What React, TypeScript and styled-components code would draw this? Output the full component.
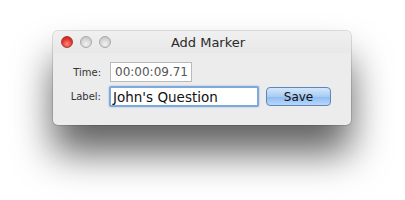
import { createGlobalStyle } from "styled-components";
import styled from "styled-components";

const GlobalStyle = createGlobalStyle`
  html, body {
    margin: 0;
    padding: 0;
    background: #ffffff;
  }
`;

const Page = styled.div`
  width: 405px;
  height: 200px;
  padding: 31px 0 0 53px;
  box-sizing: border-box;
  overflow: hidden;
  font-family: "DejaVu Sans", "Liberation Sans", sans-serif;
`;

const Window = styled.div`
  width: 298px;
  height: 94px;
  background: #ececec;
  border-radius: 5px;
  box-shadow: 0 0 0 1px rgba(0, 0, 0, 0.12), 0 28px 38px rgba(0, 0, 0, 0.62);
  display: flex;
  flex-direction: column;
`;

const TitleBar = styled.div`
  height: 22px;
  display: flex;
  align-items: center;
  padding-left: 8px;
  position: relative;
  background: linear-gradient(#f0f0f0, #e8e8e8);
  border-radius: 5px 5px 0 0;
`;

const Lights = styled.div`
  display: flex;
  gap: 7px;
`;

const Light = styled.div<{ $red?: boolean }>`
  width: 12px;
  height: 12px;
  border-radius: 50%;
  box-sizing: border-box;
  background: ${(p) =>
    p.$red
      ? "radial-gradient(circle at 50% 70%, #ff8a80, #e0302a 60%, #b3201a)"
      : "radial-gradient(circle at 50% 70%, #f2f2f2, #d2d2d2 60%, #bbbbbb)"};
  border: 1px solid ${(p) => (p.$red ? "#a83a34" : "#a9a9a9")};
`;

const Title = styled.div`
  position: absolute;
  left: 12px;
  right: 0;
  top: 4px;
  text-align: center;
  font-size: 13px;
  color: #2a2a2a;
  pointer-events: none;
`;

const Body = styled.div`
  display: flex;
  flex-direction: column;
  gap: 4px;
  padding: 9px 0 0 0;
`;

const Row = styled.div`
  display: flex;
  align-items: center;
`;

const FieldLabel = styled.div`
  width: 48px;
  text-align: right;
  font-size: 10px;
  color: #333;
  margin-right: 9px;
`;

const TimeBox = styled.div`
  width: 82px;
  height: 20px;
  box-sizing: border-box;
  border: 1px solid #b9b9b9;
  background: #fff;
  font-size: 12px;
  color: #555;
  display: flex;
  align-items: center;
  padding-left: 4px;
  white-space: nowrap;
`;

const LabelInput = styled.div`
  width: 150px;
  height: 21px;
  box-sizing: border-box;
  border: 2px solid #7fa9d8;
  border-radius: 2px;
  box-shadow: 0 0 2px #8ab4e6;
  background: #fff;
  font-size: 13.5px;
  color: #111;
  display: flex;
  align-items: center;
  padding-left: 2px;
  margin-left: -1px;
`;

const SaveButton = styled.div`
  margin-left: 7px;
  width: 65px;
  height: 19px;
  box-sizing: border-box;
  border-radius: 4px;
  border: 1px solid #5f86b9;
  background: linear-gradient(#d4e7fb 0%, #a9ccf2 50%, #8dbaf0 51%, #b7d8fb 100%);
  font-size: 12px;
  color: #111;
  display: flex;
  align-items: center;
  justify-content: center;
`;

export default function App() {
  return (
    <Page>
      <GlobalStyle />
      <Window>
        <TitleBar>
          <Lights>
            <Light $red />
            <Light />
            <Light />
          </Lights>
          <Title>Add Marker</Title>
        </TitleBar>
        <Body>
          <Row>
            <FieldLabel>Time:</FieldLabel>
            <TimeBox>00:00:09.71</TimeBox>
          </Row>
          <Row>
            <FieldLabel>Label:</FieldLabel>
            <LabelInput>John's Question</LabelInput>
            <SaveButton>Save</SaveButton>
          </Row>
        </Body>
      </Window>
    </Page>
  );
}
